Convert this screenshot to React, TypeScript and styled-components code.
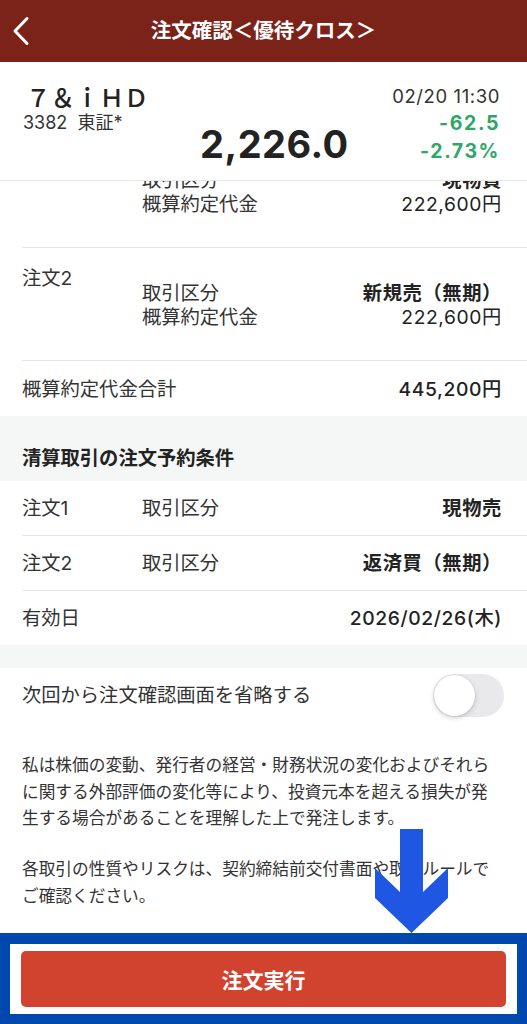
import React, { FC } from "react";
import styled, { createGlobalStyle } from "styled-components";

const GlobalStyle = createGlobalStyle`
  html, body {
    margin: 0;
    padding: 0;
    background: #ffffff;
  }
  body {
    font-family: Inter, "Noto Sans CJK JP", sans-serif;
    color: #333333;
  }
  * {
    box-sizing: border-box;
  }
`;

const Screen = styled.div`
  position: relative;
  display: flex;
  flex-direction: column;
  width: 527px;
  height: 1024px;
  overflow: hidden;
  background: #ffffff;
`;

const NavBar = styled.header`
  position: relative;
  display: flex;
  align-items: center;
  justify-content: center;
  height: 62px;
  flex-shrink: 0;
  background: #7b2219;
`;

const BackButton = styled.div`
  position: absolute;
  left: 12px;
  top: 16px;
  width: 20px;
  height: 30px;
`;

const NavTitle = styled.h1`
  margin: 0;
  color: #ffffff;
  font-size: 20.5px;
  font-weight: 700;
  line-height: 28px;
`;

const StockInfo = styled.section`
  display: flex;
  height: 118px;
  flex-shrink: 0;
  padding: 22px 27px 0 26px;
`;

const NameColumn = styled.div`
  width: 174px;
  flex-shrink: 0;
`;

const StockName = styled.div`
  color: #222222;
  font-size: 24.5px;
  font-weight: 500;
  line-height: 28px;
`;

const StockCode = styled.div`
  margin-left: -3px;
  color: #333333;
  font-size: 18px;
  line-height: 22px;
`;

const Price = styled.div`
  align-self: flex-start;
  margin-top: 40px;
  color: #222222;
  font-family: Inter, sans-serif;
  font-size: 38px;
  font-weight: 700;
  letter-spacing: 0.5px;
  line-height: 40px;
`;

const QuoteColumn = styled.div`
  display: flex;
  flex: 1;
  flex-direction: column;
  align-items: flex-end;
`;

const QuoteTime = styled.div`
  color: #333333;
  font-size: 18.5px;
  letter-spacing: 0.6px;
  line-height: 24px;
`;

const Change = styled.div`
  margin-top: 2px;
  color: #2ea766;
  font-size: 19.5px;
  font-weight: 700;
  letter-spacing: 1.6px;
  line-height: 26px;
`;

const ScrollArea = styled.main`
  flex: 1;
  overflow: hidden;
  border-top: 1px solid #e8e8e8;
`;

const ScrollContent = styled.div<{ offset: number }>`
  margin-top: ${({ offset }) => `${offset}px`};
`;

const Section = styled.div`
  padding-left: 22px;
  background: #ffffff;
`;

interface IRowProps {
  divider?: boolean;
  height?: string;
}
const Row = styled.div<IRowProps>`
  display: flex;
  align-items: center;
  height: ${({ height }) => height || "55px"};
  padding-right: 25px;
  border-bottom: ${({ divider }) => (divider ? "1px solid #e6e6e6" : "none")};
  font-size: 19.3px;
  line-height: 24px;
`;

const OrderRow = styled.div`
  display: flex;
  align-items: flex-start;
  height: 113px;
  padding: 18px 25px 0 0;
  border-bottom: 1px solid #e6e6e6;
  font-size: 19.3px;
  line-height: 24px;
`;

const Label = styled.div`
  width: 120px;
  flex-shrink: 0;
  color: #333333;
`;

const SubBlock = styled.div`
  flex: 1;
  margin-top: 15px;
`;

const SubLine = styled.div`
  display: flex;
  justify-content: space-between;
`;

const Key = styled.span`
  flex: 1;
  color: #333333;
`;

interface IValueProps {
  weight?: string;
}
const Value = styled.span<IValueProps>`
  color: #222222;
  font-weight: ${({ weight }) => weight || "400"};
  letter-spacing: 0.6px;
  text-align: right;
`;

const GrayHeading = styled.div`
  height: 65px;
  padding: 30px 22px 0;
  background: #f5f6f6;
  color: #222222;
  font-size: 19.3px;
  font-weight: 700;
  line-height: 24px;
`;

const GraySpacer = styled.div`
  height: 23px;
  background: #f5f6f6;
`;

const ToggleRow = styled.div`
  display: flex;
  align-items: center;
  justify-content: space-between;
  height: 54px;
  padding: 0 23px 0 22px;
  font-size: 19.3px;
  line-height: 24px;
`;

const Toggle = styled.div`
  position: relative;
  width: 71px;
  height: 43px;
  border-radius: 22px;
  background: #e9e9eb;
`;

const Knob = styled.div`
  position: absolute;
  top: 1px;
  left: 1px;
  width: 41px;
  height: 41px;
  border-radius: 50%;
  background: #ffffff;
  box-shadow: 0 2px 5px rgba(0, 0, 0, 0.18), 0 0 0 0.5px rgba(0, 0, 0, 0.06);
`;

const Notice = styled.div`
  padding: 30px 25px 0 22px;
  color: #333333;
  font-size: 16.7px;
  line-height: 26.5px;

  p {
    margin: 0 0 24.5px;
  }
`;

const Footer = styled.footer`
  flex-shrink: 0;
  height: 91px;
  padding: 11px 10px 10px;
  background: #0048ae;
`;

const FooterInner = styled.div`
  height: 70px;
  padding: 7px 11px;
  background: #ffffff;
`;

const SubmitButton = styled.button`
  display: flex;
  align-items: center;
  justify-content: center;
  width: 100%;
  height: 56px;
  border: none;
  border-radius: 5px;
  background: #d2432f;
  color: #ffffff;
  font-family: Inter, "Noto Sans CJK JP", sans-serif;
  font-size: 21px;
  font-weight: 700;
`;

const PointerArrow = styled.svg`
  position: absolute;
  left: 372px;
  top: 829px;
`;

const App: FC = () => {
  return (
    <Screen>
      <GlobalStyle />
      <NavBar>
        <BackButton>
          <svg width="20" height="30" viewBox="0 0 20 30">
            <polyline
              points="15,2.5 3,15 15,27.5"
              fill="none"
              stroke="#ffffff"
              strokeWidth="3"
              strokeLinecap="round"
              strokeLinejoin="round"
            />
          </svg>
        </BackButton>
        <NavTitle>注文確認＜優待クロス＞</NavTitle>
      </NavBar>

      <StockInfo>
        <NameColumn>
          <StockName>７＆ｉＨＤ</StockName>
          <StockCode>3382&nbsp;&nbsp;東証*</StockCode>
        </NameColumn>
        <Price>2,226.0</Price>
        <QuoteColumn>
          <QuoteTime>02/20 11:30</QuoteTime>
          <Change>-62.5</Change>
          <Change>-2.73%</Change>
        </QuoteColumn>
      </StockInfo>

      <ScrollArea>
        <ScrollContent offset={-46}>
          <Section>
            <OrderRow>
              <Label />
              <SubBlock>
                <SubLine>
                  <Key>取引区分</Key>
                  <Value weight="700">現物買</Value>
                </SubLine>
                <SubLine>
                  <Key>概算約定代金</Key>
                  <Value>222,600円</Value>
                </SubLine>
              </SubBlock>
            </OrderRow>
            <OrderRow>
              <Label>注文2</Label>
              <SubBlock>
                <SubLine>
                  <Key>取引区分</Key>
                  <Value weight="700">新規売（無期）</Value>
                </SubLine>
                <SubLine>
                  <Key>概算約定代金</Key>
                  <Value>222,600円</Value>
                </SubLine>
              </SubBlock>
            </OrderRow>
            <Row>
              <Key>概算約定代金合計</Key>
              <Value weight="500">445,200円</Value>
            </Row>
          </Section>

          <GrayHeading>清算取引の注文予約条件</GrayHeading>

          <Section>
            <Row divider>
              <Label>注文1</Label>
              <Key>取引区分</Key>
              <Value weight="700">現物売</Value>
            </Row>
            <Row divider>
              <Label>注文2</Label>
              <Key>取引区分</Key>
              <Value weight="700">返済買（無期）</Value>
            </Row>
            <Row height="54px">
              <Key>有効日</Key>
              <Value weight="500">2026/02/26(木)</Value>
            </Row>
          </Section>

          <GraySpacer />

          <ToggleRow>
            <span>次回から注文確認画面を省略する</span>
            <Toggle>
              <Knob />
            </Toggle>
          </ToggleRow>

          <Notice>
            <p>
              私は株価の変動、発行者の経営・財務状況の変化およびそれらに関する外部評価の変化等により、投資元本を超える損失が発生する場合があることを理解した上で発注します。
            </p>
            <p>各取引の性質やリスクは、契約締結前交付書面や取引ルールでご確認ください。</p>
          </Notice>
        </ScrollContent>
      </ScrollArea>

      <Footer>
        <FooterInner>
          <SubmitButton>注文実行</SubmitButton>
        </FooterInner>
      </Footer>

      <PointerArrow width="79" height="105" viewBox="0 0 79 105">
        <polygon
          points="28,0 51,0 51,63 76,39 76,69 39.5,104 3,69 3,39 28,63"
          fill="#2057e2"
        />
      </PointerArrow>
    </Screen>
  );
};

export default App;
